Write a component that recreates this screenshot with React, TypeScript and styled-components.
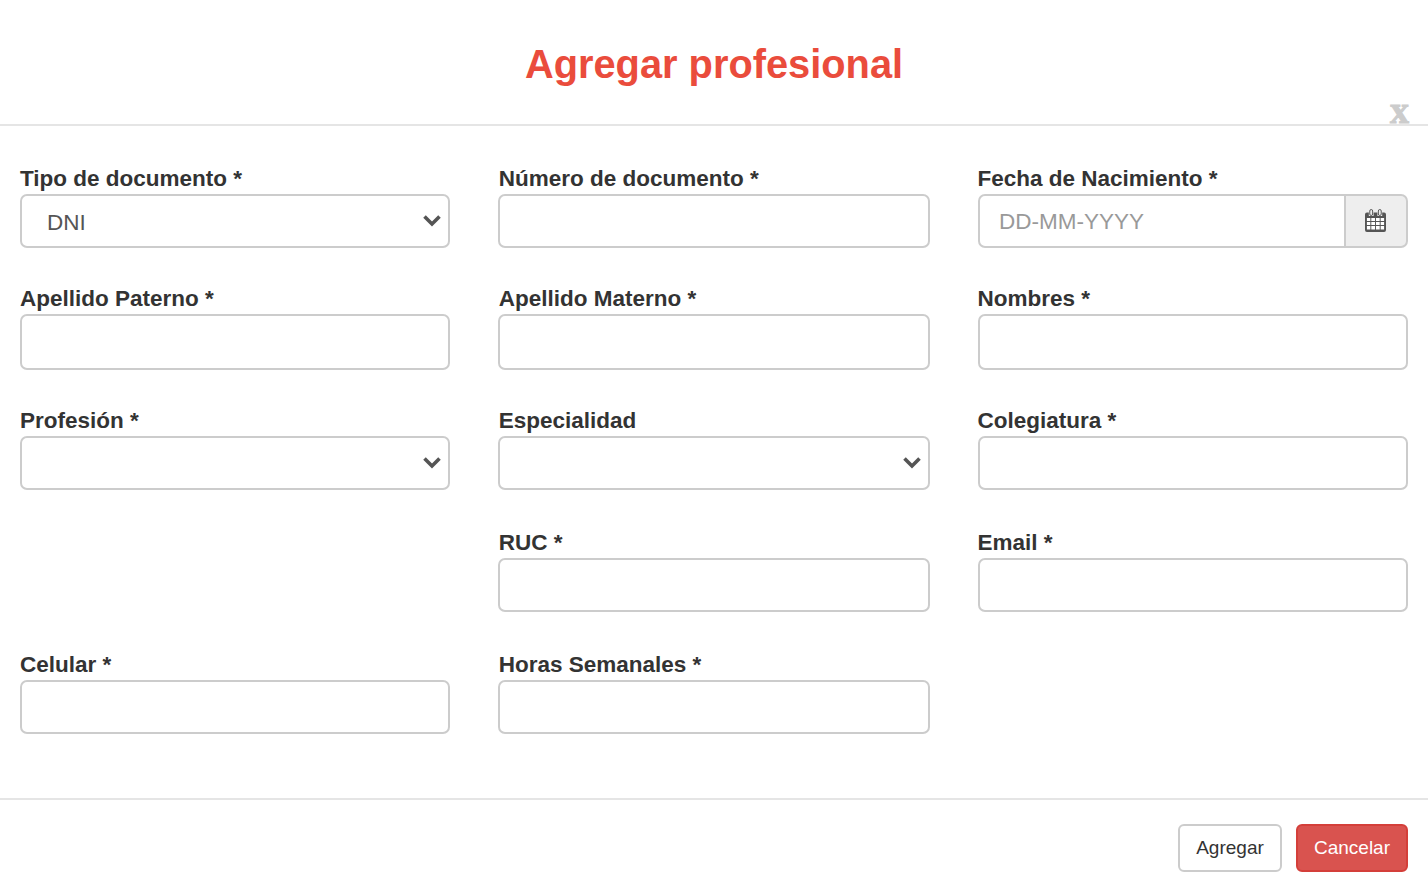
import React from 'react';
import styled, { createGlobalStyle } from 'styled-components';

const GlobalStyle = createGlobalStyle`
  html, body {
    margin: 0;
    padding: 0;
    background: #fff;
    font-family: "Liberation Sans", Arial, sans-serif;
    color: #333;
  }
  * { box-sizing: border-box; }
`;

const CalendarIcon = () => (
  <svg width="21" height="24" viewBox="0 0 22 24" preserveAspectRatio="none" fill="none">
    <path d="M2 3.500h2v3.500h5V3.500h4v3.500h5V3.500h2a2 2 0 0 1 2 2V21a2 2 0 0 1-2 2H2a2 2 0 0 1-2-2V5.500a2 2 0 0 1 2-2Z" fill="#555" />
    <rect x="5" y="0.500" width="3" height="6" rx="1.500" stroke="#555" strokeWidth="1" />
    <rect x="14" y="0.500" width="3" height="6" rx="1.500" stroke="#555" strokeWidth="1" />
    <path
      d="M2 9h3.600v3H2zM6.600 9h3.900v3H6.600zM11.500 9h3.900v3h-3.900zM16.400 9H20v3h-3.600zM2 13h3.600v3H2zM6.600 13h3.900v3H6.600zM11.500 13h3.900v3h-3.900zM16.400 13H20v3h-3.600zM2 17h3.600v3.500H2zM6.600 17h3.900v3.500H6.600zM11.500 17h3.900v3.500h-3.900zM16.400 17H20v3.500h-3.600z"
      fill="#fff"
    />
  </svg>
);

const Chevron = () => (
  <svg width="20" height="13" viewBox="0 0 20 13" fill="none">
    <path d="M2.500 2.500 10 10l7.500-7.500" stroke="#555" strokeWidth="3.600" />
  </svg>
);

const Select: React.FC<{ value?: string }> = ({ value }) => (
  <SelectWrap>
    <SelectBox defaultValue={value || ''}>
      <option value={value || ''}>{value || ''}</option>
    </SelectBox>
    <Arrow>
      <Chevron />
    </Arrow>
  </SelectWrap>
);

const Field: React.FC<{ label: string; children: React.ReactNode }> = ({ label, children }) => (
  <FieldWrap>
    <Label>{label}</Label>
    {children}
  </FieldWrap>
);

export default function App() {
  return (
    <Modal>
      <GlobalStyle />
      <Header>
        <Title>Agregar profesional</Title>
        <Close>x</Close>
      </Header>
      <Form>
        <Field label="Tipo de documento *">
          <Select value="DNI" />
        </Field>
        <Field label="Número de documento *">
          <Input />
        </Field>
        <Field label="Fecha de Nacimiento *">
          <InputGroup>
            <DateInput placeholder="DD-MM-YYYY" />
            <Addon>
              <CalendarIcon />
            </Addon>
          </InputGroup>
        </Field>

        <Field label="Apellido Paterno *">
          <Input $tall />
        </Field>
        <Field label="Apellido Materno *">
          <Input $tall />
        </Field>
        <Field label="Nombres *">
          <Input $tall />
        </Field>

        <Field label="Profesión *">
          <Select />
        </Field>
        <Field label="Especialidad">
          <Select />
        </Field>
        <Field label="Colegiatura *">
          <Input />
        </Field>

        <div />
        <Field label="RUC *">
          <Input />
        </Field>
        <Field label="Email *">
          <Input />
        </Field>

        <Field label="Celular *">
          <Input />
        </Field>
        <Field label="Horas Semanales *">
          <Input />
        </Field>
      </Form>
      <Footer>
        <Button>Agregar</Button>
        <Button $danger>Cancelar</Button>
      </Footer>
    </Modal>
  );
}

const Modal = styled.div`
  width: 1428px;
  height: 888px;
  display: flex;
  flex-direction: column;
  background: #fff;
  overflow: hidden;
`;

const Header = styled.div`
  position: relative;
  height: 126px;
  flex: none;
  padding-top: 41px;
  border-bottom: 2px solid #e5e5e5;
  text-align: center;
`;

const Title = styled.h1`
  margin: 0;
  font-size: 39.800px;
  line-height: 46px;
  font-weight: 700;
  color: #ea4c3c;
`;

const Close = styled.span`
  position: absolute;
  right: 19px;
  bottom: -5px;
  font-family: "Liberation Serif", serif;
  font-size: 38px;
  line-height: 38px;
  font-weight: 700;
  color: #ccc;
  -webkit-text-stroke: 1px #ccc;
`;

const Form = styled.div`
  flex: 1;
  display: grid;
  grid-template-columns: 430px 432px 430px;
  grid-template-rows: 120px 122px 122px 122px auto;
  column-gap: 48px;
  padding: 40px 20px 0;
`;

const Label = styled.label`
  height: 28px;
  font-size: 22.500px;
  line-height: 26px;
  font-weight: 700;
  color: #333;
`;

const FieldWrap = styled.div`
  display: flex;
  flex-direction: column;
  align-items: stretch;
  &:nth-child(3n + 2) > ${Label} {
    padding-left: 0.7px;
  }
  &:nth-child(3n) > ${Label} {
    margin-left: -0.6px;
  }
`;

const Input = styled.input<{ $tall?: boolean }>`
  display: block;
  width: 100%;
  height: ${({ $tall }) => ($tall ? '56px' : '54px')};
  padding: 0 20px;
  border: 2px solid #ccc;
  border-radius: 7px;
  background: #fff;
  outline: none;
  font: 22.500px "Liberation Sans", Arial, sans-serif;
  color: #555;
`;

const SelectWrap = styled.div`
  position: relative;
`;

const SelectBox = styled.select`
  display: block;
  width: 100%;
  height: 54px;
  padding: 2px 25px 0;
  border: 2px solid #ccc;
  border-radius: 7px;
  background: #fff;
  outline: none;
  appearance: none;
  font: 22.500px "Liberation Sans", Arial, sans-serif;
  color: #555;
`;

const Arrow = styled.span`
  position: absolute;
  top: 20px;
  right: 8px;
  display: flex;
  pointer-events: none;
`;

const InputGroup = styled.div`
  display: flex;
  height: 54px;
`;

const DateInput = styled.input`
  flex: 1;
  min-width: 0;
  padding: 2px 19px 0;
  border: 2px solid #ccc;
  border-radius: 7px 0 0 7px;
  outline: none;
  font: 22.500px "Liberation Sans", Arial, sans-serif;
  color: #555;
  &::placeholder {
    color: #999;
    opacity: 1;
  }
`;

const Addon = styled.span`
  width: 62px;
  flex: none;
  display: flex;
  align-items: center;
  justify-content: center;
  padding-right: 2px;
  border: 2px solid #ccc;
  border-left: 0;
  border-radius: 0 7px 7px 0;
  background: #eee;
`;

const Footer = styled.div`
  flex: none;
  height: 90px;
  display: flex;
  justify-content: flex-end;
  align-items: flex-start;
  gap: 14px;
  padding: 24px 20px 0;
  border-top: 2px solid #e5e5e5;
`;

const Button = styled.button<{ $danger?: boolean }>`
  height: 48px;
  width: ${({ $danger }) => ($danger ? '112px' : '104px')};
  padding: 0;
  border: 2px solid ${({ $danger }) => ($danger ? '#d43f3a' : '#ccc')};
  border-radius: 6px;
  background: ${({ $danger }) => ($danger ? '#d9534f' : '#fff')};
  color: ${({ $danger }) => ($danger ? '#fff' : '#333')};
  font: 19px "Liberation Sans", Arial, sans-serif;
`;
